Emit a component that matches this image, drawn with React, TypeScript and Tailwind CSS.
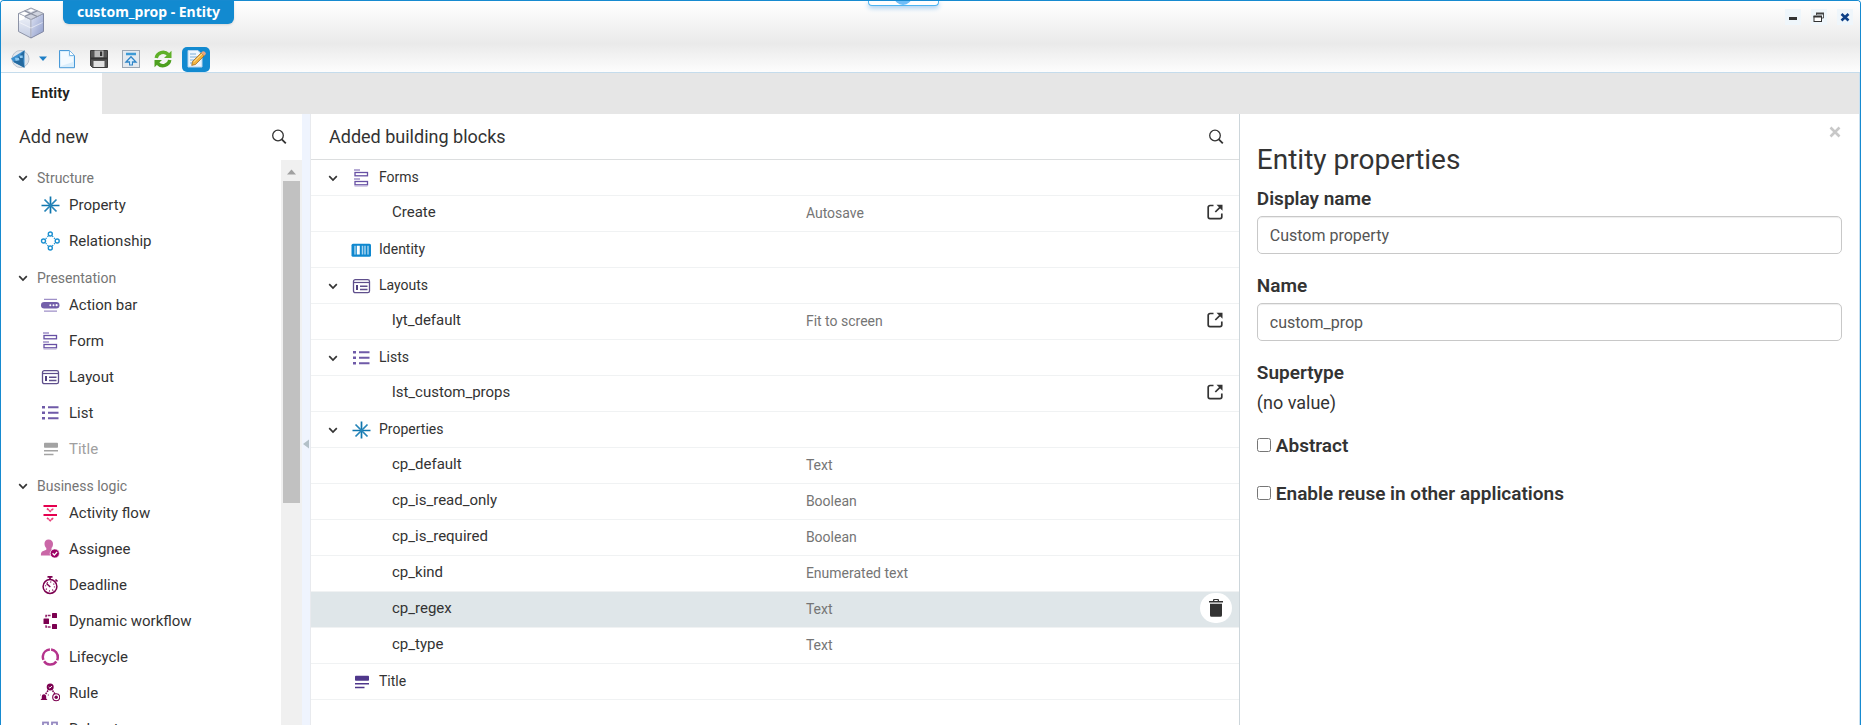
import { useState, type ReactNode } from "react";
import clsx from "clsx";

type IconProps = { className?: string };

function Icon({ children, className = "size-5" }: { children: ReactNode; className?: string }) {
  return (
    <svg viewBox="0 0 20 20" fill="none" className={clsx("shrink-0", className)} aria-hidden="true">
      {children}
    </svg>
  );
}

function Chevron() {
  return (
    <svg viewBox="0 0 10 10" className="size-[10px] shrink-0" fill="none" aria-hidden="true">
      <path d="M1.2 3.2 5 7l3.800-3.800" stroke="#333" strokeWidth="1.700" />
    </svg>
  );
}

function SearchIcon() {
  return (
    <svg viewBox="0 0 16 16" className="size-4" fill="none" stroke="#333" aria-hidden="true">
      <circle cx="7" cy="6.500" r="5.300" strokeWidth="1.300" />
      <path d="m10.800 10.300 4 4" strokeWidth="1.800" />
    </svg>
  );
}

function PropertyIcon({ className }: IconProps) {
  return (
    <Icon className={className}>
      <path d="M10.500 1.500v17M1.500 10.500h18" stroke="#0f76ae" strokeWidth="1.700" />
      <path d="m4.500 4.500 12 12m0-12-12 12" stroke="#2584b8" strokeWidth="1.700" />
    </Icon>
  );
}

function RelationshipIcon({ className }: IconProps) {
  return (
    <Icon className={className}>
      <g stroke="#1a8fd0" strokeWidth="1.400">
        <circle cx="10.300" cy="3" r="2" />
        <circle cx="3.500" cy="10" r="2" />
        <circle cx="17.200" cy="10" r="2" />
        <circle cx="10.300" cy="17" r="2" />
        <path d="m8.300 5-3 3.200M12.300 5l3 3.200M8.300 15l-3-3.200M12.300 15l3-3.200" strokeWidth="1.200" strokeDasharray="1.300 1.200" />
      </g>
    </Icon>
  );
}

function ActionBarIcon({ className }: IconProps) {
  return (
    <Icon className={className}>
      <path d="M4 4.300h13M4 16.200h13" stroke="#9f90c8" strokeWidth="1.300" />
      <rect x="1" y="7" width="18.500" height="6.400" rx="3.200" fill="#7460aa" />
      <g fill="#fff">
        <circle cx="10.300" cy="10.200" r="1" />
        <circle cx="13.500" cy="10.200" r="1" />
        <circle cx="16.600" cy="10.200" r="1.100" />
      </g>
    </Icon>
  );
}

function FormIcon({ className }: IconProps) {
  return (
    <Icon className={className}>
      <path d="M3 2h6M3 11h6" stroke="#9f90c8" strokeWidth="1.400" />
      <rect x="4" y="4.500" width="12.500" height="3.300" stroke="#6750a4" strokeWidth="1.300" />
      <rect x="4" y="13.500" width="12.500" height="3.300" stroke="#6750a4" strokeWidth="1.300" />
      <path d="M3.500 18.200h13" stroke="#c5bcde" strokeWidth="1" />
    </Icon>
  );
}

function LayoutIcon({ className }: IconProps) {
  return (
    <Icon className={className}>
      <rect x="2.500" y="3.700" width="16" height="13" rx="1.800" stroke="#5f4f8c" strokeWidth="1.300" />
      <path d="M2.500 6.500h16" stroke="#5f4f8c" strokeWidth="1.200" />
      <path d="M6 9v5" stroke="#4f3f7e" strokeWidth="2" />
      <path d="M9 10.200h7.500M9 13.500h7.500" stroke="#5f4f8c" strokeWidth="1.400" />
    </Icon>
  );
}

function ListIcon({ className }: IconProps) {
  return (
    <Icon className={className}>
      <path d="M2 4.300h3M2 9.800h3M2 15.300h3" stroke="#6f5aa8" strokeWidth="2.400" />
      <path d="M8 4.300h10.500M8 9.800h10.500M8 15.300h10.500" stroke="#6f5aa8" strokeWidth="2" />
    </Icon>
  );
}

function TitleShape({ color, className }: { color: string; className?: string }) {
  return (
    <Icon className={className}>
      <rect x="4" y="3.800" width="14" height="5" rx="0.800" fill={color} />
      <path d="M4 11.700h14M4 15.500h9.500" stroke={color} strokeWidth="1.500" />
    </Icon>
  );
}

function TitleIcon({ className }: IconProps) {
  return <TitleShape color="#4f378b" className={className} />;
}

function TitleMutedIcon({ className }: IconProps) {
  return <TitleShape color="#a3a3a3" className={className} />;
}

function IdentityIcon({ className }: IconProps) {
  return (
    <Icon className={className}>
      <rect x="0.500" y="3.700" width="19.500" height="13" rx="1.500" fill="#0f88cf" />
      <path d="M4 5.800v8.800M17 5.800v8.800" stroke="#fff" strokeWidth="0.900" />
      <path d="M7.300 5.800v8.800" stroke="#fff" strokeWidth="3" />
      <path d="M11.500 5.800v8.800M14 5.800v8.800" stroke="#a7d3ef" strokeWidth="1.500" />
    </Icon>
  );
}

function ActivityFlowIcon({ className }: IconProps) {
  return (
    <Icon className={className}>
      <path d="M3.500 3h13.500M3.500 12h13.500" stroke="#e5004f" strokeWidth="2" />
      <path d="m7 5.500 3.200 2.800 3.300-2.800M7 14.800l3.200 2.800 3.300-2.800" stroke="#e8407a" strokeWidth="1.700" strokeDasharray="2.400 0.400" />
    </Icon>
  );
}

function AssigneeIcon({ className }: IconProps) {
  return (
    <Icon className={className}>
      <path d="M8.500.5c-2.600 0-4 1.700-4 4.300 0 1.900.8 3.200 1.800 4.200v1.800L2.700 12.200C1.300 12.900.9 13.800.9 16.500h11L11.500 9c1-1 1.500-2.300 1.500-4.200C13 2.200 11.200.5 8.500.5Z" fill="#ca67a7" />
      <circle cx="14.800" cy="14.500" r="4.600" fill="#9b0063" stroke="#fff" strokeWidth="0.800" />
      <path d="m12.600 14.300 1.700 1.800 2.800-3.100" stroke="#fff" strokeWidth="1.300" />
    </Icon>
  );
}

function DeadlineIcon({ className }: IconProps) {
  return (
    <Icon className={className}>
      <circle cx="10" cy="11.500" r="6.900" stroke="#7c0050" strokeWidth="1.500" />
      <circle cx="10" cy="11.500" r="4.500" stroke="#7c0050" strokeWidth="1.300" strokeDasharray="1 2.500" />
      <path d="M7.500 1.800h5M10 2v2.500M15.500 4.500l2 2" stroke="#7c0050" strokeWidth="1.700" />
      <path d="M6.500 8.500 10.300 12" stroke="#7c0050" strokeWidth="1.500" />
    </Icon>
  );
}

function WorkflowIcon({ className }: IconProps) {
  return (
    <Icon className={className}>
      <rect x="3.500" y="7.500" width="5.500" height="5.500" rx="0.600" fill="#7c0050" />
      <rect x="12" y="2" width="5" height="5" rx="0.600" fill="#7c0050" />
      <rect x="12" y="13" width="5" height="5" rx="0.600" fill="#7c0050" />
      <path d="M6 6.200V4.500h5M6 14.300V16h5" stroke="#8f1f68" strokeWidth="1.400" strokeDasharray="2.800 0.700" />
    </Icon>
  );
}

function LifecycleIcon({ className }: IconProps) {
  return (
    <Icon className={className}>
      <circle cx="10.300" cy="10" r="7.500" stroke="#b5338c" strokeWidth="2.500" strokeDasharray="14.200 1.500" transform="rotate(-84 10.300 10)" />
    </Icon>
  );
}

function RuleIcon({ className }: IconProps) {
  return (
    <Icon className={className}>
      <circle cx="10.200" cy="4" r="3.500" fill="#7c0050" />
      <path d="m8.700 4 1.200 1.200 2-2.200" stroke="#fff" strokeWidth="1" />
      <path d="m8 7.500-2.500 3.800M12.500 7.500l2.500 3.500" stroke="#7c0050" strokeWidth="1.500" strokeDasharray="1.700 0.800" />
      <path d="M4 11.200c-1.700 0-2.200 1.300-2.200 2.600v1.800L.5 17h7l-1.300-1.400v-1.800c0-1.300-.5-2.600-2.200-2.600Z" fill="#7c0050" />
      <path d="M0 12.500v-1M8.300 12.500v-1" stroke="#7c0050" />
      <circle cx="16.200" cy="14.200" r="3.500" stroke="#7c0050" strokeWidth="1.100" />
      <circle cx="16.200" cy="14.200" r="1.700" fill="#7c0050" />
    </Icon>
  );
}

function RulesetIcon({ className }: IconProps) {
  return (
    <Icon className={className}>
      <rect x="3" y="3.500" width="5" height="5" stroke="#9488c0" strokeWidth="1.800" />
      <rect x="12" y="3.500" width="5" height="5" stroke="#9488c0" strokeWidth="1.800" />
      <rect x="3" y="12.500" width="5" height="5" stroke="#9488c0" strokeWidth="1.800" />
      <rect x="12" y="12.500" width="5" height="5" stroke="#9488c0" strokeWidth="1.800" />
    </Icon>
  );
}

function OpenIcon() {
  return (
    <svg viewBox="0 0 16 16" className="size-4" fill="none" stroke="#333" strokeWidth="1.700" aria-hidden="true">
      <path d="M6.500 1.500H3A1.800 1.800 0 0 0 1.200 3.300v9.500A1.800 1.800 0 0 0 3 14.600h10a1.800 1.800 0 0 0 1.800-1.800V9.500" />
      <path d="M8.300 8 14 2.300" />
      <path d="M9.500.700h6v6Z" fill="#333" stroke="none" />
    </svg>
  );
}

function TrashIcon() {
  return (
    <svg viewBox="0 0 16 20" className="h-5 w-4" fill="#333" aria-hidden="true">
      <path d="M5 3V2a1 1 0 0 1 1-1h4a1 1 0 0 1 1 1v1h4v1.500H1V3Zm1.300 0h3.400v-.9H6.300Z" />
      <path d="M2 5.700h12v11.500a1.500 1.500 0 0 1-1.500 1.500h-9A1.500 1.500 0 0 1 2 17.200Z" />
    </svg>
  );
}

function CubeLogo() {
  return (
    <svg viewBox="0 0 28 32" className="h-8 w-7" aria-hidden="true">
      <defs>
        <linearGradient id="cubeLeft" x1="0" y1="0" x2="0" y2="1">
          <stop offset="0" stopColor="#f2f5fb" />
          <stop offset="1" stopColor="#c3cce2" />
        </linearGradient>
        <linearGradient id="cubeRight" x1="0" y1="0" x2="1" y2="1">
          <stop offset="0" stopColor="#dfe4f4" />
          <stop offset="1" stopColor="#8c9ac9" />
        </linearGradient>
      </defs>
      <path d="M14 12.500 1.500 6.500v18L14 31Z" fill="url(#cubeLeft)" stroke="#8d93a6" />
      <path d="M14 12.500 26.500 6.500v18L14 31Z" fill="url(#cubeRight)" stroke="#8289a3" />
      <path d="M14 1 1.500 6.500 14 12.500l12.500-6Z" fill="#cfd3de" stroke="#999ead" />
      <path d="m7.500 3.800 12.700 5.700M20.500 3.800 7.500 9.500" stroke="#8b90a0" strokeWidth="1.200" />
      <path d="m11 3.500 3-1.400 3.200 1.400L14 5Z" fill="#fff" />
      <path d="m3.500 6.500 3.800-1.700L11.500 6.500l-4 1.900ZM7.500 9.500 2 7v7l5.500-2Z" fill="#fff" />
      <path d="M2.500 15.500 14 21l11.500-5.500M14 12.500V30" stroke="#fff" strokeOpacity=".55" fill="none" />
    </svg>
  );
}

function NavigateIcon() {
  return (
    <Icon>
      <circle cx="10.500" cy="10" r="8.500" fill="#dfe5ec" stroke="#b9c1cc" />
      <path d="M1 9.500 14.500 1.300v17.500L3.500 13Z" fill="#3b8fcf" />
      <path d="M14.500 1.300 13.300 12l1.200 6.800L3.500 13Z" fill="#24699f" />
      <path d="M5 8.800h3.800l.7 2.400-4 .8ZM9.300 6.500h3.400v2.600H10Z" fill="#8cc9f2" />
    </Icon>
  );
}

function NewDocIcon() {
  return (
    <Icon>
      <path d="M2.500 1.500h10l5 5v12.200h-15Z" fill="#d9eefc" stroke="#4a9ad8" />
      <path d="M4 3h7.500v5H16v5L4 17Z" fill="#f3faff" />
      <path d="M12.500 1.500v5h5Z" fill="#fff" stroke="#7db9e6" />
    </Icon>
  );
}

function SaveIcon() {
  return (
    <Icon>
      <path d="M1.500 1.500h17v17h-15l-2-2Z" fill="#555" stroke="#3c3c3c" />
      <rect x="5.500" y="1.500" width="9" height="7" fill="#b9b9b9" />
      <rect x="11" y="2.500" width="2.200" height="4.500" fill="#333" />
      <path d="M2 9.500h16" stroke="#333" strokeWidth="2" />
      <rect x="4.500" y="12" width="11" height="6" fill="#e2e2e2" />
    </Icon>
  );
}

function PublishIcon() {
  return (
    <Icon>
      <rect x="1.500" y="1.500" width="17" height="17" fill="#e3e9ef" stroke="#9aa6b3" />
      <path d="M5 5h10" stroke="#3d9ad6" strokeWidth="2.400" />
      <path d="M10 9v7.500" stroke="#3085c7" strokeWidth="4" />
      <path d="m5 13 5-5.200 5 5.200Z" fill="#d9efff" stroke="#3085c7" strokeWidth="1.300" />
      <path d="M10 10v5.500" stroke="#d9efff" strokeWidth="1.800" />
    </Icon>
  );
}

function RefreshIcon() {
  return (
    <Icon>
      <path d="M3.200 9a7 7 0 0 1 12-3.500" stroke="#5fb029" strokeWidth="3.400" />
      <path d="M18.500 1.700V9H11Z" fill="#5fb029" />
      <path d="M16.800 11a7 7 0 0 1-12 3.500" stroke="#4da01f" strokeWidth="3.400" />
      <path d="M1.500 18.300V11H9Z" fill="#4da01f" />
    </Icon>
  );
}

function EditIcon() {
  return (
    <Icon>
      <path d="M2 1.500h10l4 4v12.500H2Z" fill="#eef6fd" stroke="#b5d3ec" />
      <path d="M4 5h6M4 8h7M4 11h5M4 14h4" stroke="#7faed6" />
      <path d="m6.500 12.500 8.700-8.700 3 3L9.500 15.500l-3.800.9Z" fill="#f3b33d" stroke="#94611c" strokeWidth="0.700" />
      <path d="m15.200 3.800 1.200-1.200a1.500 1.500 0 0 1 2 0l1 1a1.500 1.500 0 0 1 0 2l-1.200 1.200Z" fill="#e9a37e" />
      <path d="m7.800 12.800 8.400-8" stroke="#fde49b" />
    </Icon>
  );
}

type PaletteItem = { label: string; icon: (p: IconProps) => ReactNode; disabled?: boolean };

const PALETTE: { title: string; items: PaletteItem[] }[] = [
  {
    title: "Structure",
    items: [
      { label: "Property", icon: PropertyIcon },
      { label: "Relationship", icon: RelationshipIcon },
    ],
  },
  {
    title: "Presentation",
    items: [
      { label: "Action bar", icon: ActionBarIcon },
      { label: "Form", icon: FormIcon },
      { label: "Layout", icon: LayoutIcon },
      { label: "List", icon: ListIcon },
      { label: "Title", icon: TitleMutedIcon, disabled: true },
    ],
  },
  {
    title: "Business logic",
    items: [
      { label: "Activity flow", icon: ActivityFlowIcon },
      { label: "Assignee", icon: AssigneeIcon },
      { label: "Deadline", icon: DeadlineIcon },
      { label: "Dynamic workflow", icon: WorkflowIcon },
      { label: "Lifecycle", icon: LifecycleIcon },
      { label: "Rule", icon: RuleIcon },
      { label: "Ruleset", icon: RulesetIcon },
    ],
  },
];

type Block = { name: string; detail?: string; opens?: boolean };

const BLOCKS: { title: string; icon: (p: IconProps) => ReactNode; children: Block[] }[] = [
  { title: "Forms", icon: FormIcon, children: [{ name: "Create", detail: "Autosave", opens: true }] },
  { title: "Identity", icon: IdentityIcon, children: [] },
  { title: "Layouts", icon: LayoutIcon, children: [{ name: "lyt_default", detail: "Fit to screen", opens: true }] },
  { title: "Lists", icon: ListIcon, children: [{ name: "lst_custom_props", opens: true }] },
  {
    title: "Properties",
    icon: PropertyIcon,
    children: [
      { name: "cp_default", detail: "Text" },
      { name: "cp_is_read_only", detail: "Boolean" },
      { name: "cp_is_required", detail: "Boolean" },
      { name: "cp_kind", detail: "Enumerated text" },
      { name: "cp_regex", detail: "Text" },
      { name: "cp_type", detail: "Text" },
    ],
  },
  { title: "Title", icon: TitleIcon, children: [] },
];

function WindowHeader() {
  return (
    <header className="relative h-[72px] shrink-0 border-b border-[#c5dcec] bg-linear-to-b from-white via-[#eaeaea] via-60% to-[#fdfdfd]">
      <div className="flex h-11 items-start justify-between pr-[7px]">
        <div className="flex items-start">
          <div className="pl-4 pt-1.5">
            <CubeLogo />
          </div>
          <h1 className="ml-[18px] h-[23px] rounded-b-md bg-[#128ad0] px-[14px] font-['Noto_Sans'] text-[14px] leading-[22px] font-bold text-white shadow-sm">
            custom_prop - Entity
          </h1>
        </div>
        <div className="flex gap-[10px] pt-2">
          <button aria-label="Minimize" className="flex size-4 items-center justify-center bg-[#eff6fb]">
            <svg viewBox="0 0 16 16" className="size-4"><path d="M4 9.500h8" stroke="#333" strokeWidth="3" /></svg>
          </button>
          <button aria-label="Restore" className="flex size-4 items-center justify-center bg-[#eff6fb]">
            <svg viewBox="0 0 16 16" className="size-4" fill="none">
              <path d="M5.500 6V4.500h7V9H11" stroke="#555" />
              <path d="M5 4.500h8" stroke="#444" strokeWidth="2" />
              <rect x="3" y="7.500" width="7.500" height="5" fill="#fff" stroke="#333" />
              <path d="M2.500 7.500H11" stroke="#333" strokeWidth="2" />
            </svg>
          </button>
          <button aria-label="Close window" className="flex size-4 items-center justify-center bg-[#eff6fb]">
            <svg viewBox="0 0 16 16" className="size-4"><path d="m4.500 5 7 6.500M11.500 5l-7 6.500" stroke="#0c3f86" strokeWidth="2.600" /></svg>
          </button>
        </div>
      </div>

      {/* Pull-down handle */}
      <div className="absolute left-1/2 top-0 flex h-[5px] w-[71px] -translate-x-[63px] justify-center overflow-visible rounded-b-[4px] border border-t-0 border-[#4db5f2] bg-white shadow-[0_2px_5px_#9cc9ee]">
        <svg viewBox="0 0 18 4" className="h-1 w-[18px]" aria-hidden="true">
          <circle cx="9" cy="-5" r="9" fill="#6dbdf7" />
        </svg>
      </div>

      <div className="flex h-7 items-center pl-[9px]">
        <button aria-label="Navigate"><NavigateIcon /></button>
        <button aria-label="History" className="ml-2">
          <svg viewBox="0 0 10 6" className="h-1.5 w-[10px]"><path d="M1 .5h8L5 5Z" fill="#1e7fc6" /></svg>
        </button>
        <div className="ml-[9px] flex items-center gap-3">
          <button aria-label="New"><NewDocIcon /></button>
          <button aria-label="Save"><SaveIcon /></button>
          <button aria-label="Publish"><PublishIcon /></button>
          <button aria-label="Refresh"><RefreshIcon /></button>
        </div>
        <button aria-label="Edit" className="ml-[9px] flex h-[25px] w-7 items-center justify-center rounded-[5px] bg-[#128ad0]">
          <EditIcon />
        </button>
      </div>
    </header>
  );
}

function Palette() {
  return (
    <aside className="flex w-[301px] shrink-0 flex-col">
      <div className="flex h-[46px] shrink-0 items-center justify-between pb-px pl-[18px] pr-[15px]">
        <h2 className="text-[18px]">Add new</h2>
        <button aria-label="Search palette"><SearchIcon /></button>
      </div>
      <div className="flex min-h-0 flex-1">
        <div className="flex min-w-0 flex-1 flex-col gap-[10px] overflow-hidden pt-[9px]">
          {PALETTE.map((group) => (
            <section key={group.title}>
              <button className="flex h-[18px] items-center gap-[9px] pl-[17px] text-[14px] text-[#757575]">
                <Chevron />
                {group.title}
              </button>
              <ul>
                {group.items.map(({ label, icon: ItemIcon, disabled }) => (
                  <li
                    key={label}
                    className={clsx("flex h-9 items-center gap-[9px] pl-[39px] text-[15px]", disabled && "text-[#a0a0a0]")}
                  >
                    <ItemIcon />
                    {label}
                  </li>
                ))}
              </ul>
            </section>
          ))}
        </div>
        {/* Scrollbar */}
        <div className="flex w-[21px] shrink-0 flex-col bg-[#f0f0f0] px-0.5">
          <svg viewBox="0 0 17 21" className="h-[21px] w-[17px]" aria-hidden="true">
            <path d="M4 14.500 8.500 9.500l4.500 5Z" fill="#a0a0a0" />
          </svg>
          <div className="h-[57%] w-[17px] bg-[#c1c1c1]" />
        </div>
      </div>
    </aside>
  );
}

function BlockRow({ block, selected, onSelect }: { block: Block; selected: boolean; onSelect: () => void }) {
  return (
    <li
      onClick={onSelect}
      className={clsx(
        "grid h-9 grid-cols-2 items-center border-b border-[#f0f2f3] pl-[81px] pr-[19px]",
        selected && "bg-[#dfe6e9]",
      )}
    >
      <span className="pb-0.5 text-[15px]">{block.name}</span>
      <span className="-mr-3 flex h-[35px] items-center justify-between text-[14px] text-[#757575]">
        {block.detail}
        {block.opens && (
          <button aria-label={`Open ${block.name}`} className="mb-[3px] ml-auto flex w-8 justify-center pr-0.5"><OpenIcon /></button>
        )}
        {selected && (
          <button aria-label={`Delete ${block.name}`} className="mb-[3px] ml-auto flex h-[30px] w-8 items-center justify-center rounded-full bg-white">
            <TrashIcon />
          </button>
        )}
      </span>
    </li>
  );
}

function BuildingBlocks() {
  const [selected, setSelected] = useState("cp_regex");

  return (
    <main className="min-w-0 border-r border-[#cdd6db]">
      <div className="flex h-[46px] items-center justify-between border-b border-[#dcdedf] pl-[18px] pr-[15px]">
        <h2 className="text-[18px]">Added building blocks</h2>
        <button aria-label="Search building blocks"><SearchIcon /></button>
      </div>
      <ul>
        {BLOCKS.map(({ title, icon: GroupIcon, children }) => (
          <li key={title}>
            <div className="flex h-9 items-center border-b border-[#f0f2f3] pl-[17px] text-[14px]">
              <span className="flex w-[23px]">
                {children.length > 0 && <button aria-label={`Collapse ${title}`}><Chevron /></button>}
              </span>
              <GroupIcon />
              <span className="ml-2">{title}</span>
            </div>
            <ul>
              {children.map((block) => (
                <BlockRow
                  key={block.name}
                  block={block}
                  selected={block.name === selected}
                  onSelect={() => setSelected(block.name)}
                />
              ))}
            </ul>
          </li>
        ))}
      </ul>
    </main>
  );
}

function TextField({ id, label, value }: { id: string; label: string; value: string }) {
  return (
    <div className="mb-[18px]">
      <label htmlFor={id} className="mb-[3px] block text-[19px] leading-7 font-semibold">{label}</label>
      <input
        id={id}
        defaultValue={value}
        className="block h-[38px] w-full rounded-[5px] border border-[#c8c8c8] px-3 text-[16px] text-[#555] shadow-[inset_0_1px_1px_rgba(0,0,0,0.075)]"
      />
    </div>
  );
}

function CheckField({ label }: { label: string }) {
  return (
    <label className="mb-5 flex h-7 items-center gap-[5px] text-[19px] font-semibold">
      <input type="checkbox" className="mb-0.5 size-[14px]" />
      {label}
    </label>
  );
}

function PropertiesPanel() {
  return (
    <aside className="relative min-w-0 px-[17px] pt-[26px]">
      <button aria-label="Close panel" className="absolute right-[18px] top-3">
        <svg viewBox="0 0 12 12" className="size-3"><path d="m1.500 1.500 9 9m0-9-9 9" stroke="#c8c8c8" strokeWidth="2.600" /></svg>
      </button>
      <h2 className="mb-[5px] text-[28px] leading-[40px]">Entity properties</h2>
      <TextField id="display-name" label="Display name" value="Custom property" />
      <TextField id="name" label="Name" value="custom_prop" />
      <dl className="mb-[13px]">
        <dt className="text-[19px] leading-7 font-semibold">Supertype</dt>
        <dd className="text-[18px] leading-8">(no value)</dd>
      </dl>
      <CheckField label="Abstract" />
      <CheckField label="Enable reuse in other applications" />
    </aside>
  );
}

export default function App() {
  return (
    <div className="flex h-screen flex-col overflow-hidden rounded-t border border-b-0 border-[#168ad0] bg-white font-['Roboto',sans-serif] text-[#333]">
      <WindowHeader />
      <div className="flex min-h-0 flex-1 flex-col border-r border-[#c9e0f0]">
        <nav className="flex h-[41px] shrink-0 bg-[#e6e6e6]">
          <button className="w-[101px] bg-white pr-0.5 text-[15px] font-semibold text-[#222]">Entity</button>
        </nav>
        <div className="flex min-h-0 flex-1">
          <Palette />
          <button aria-label="Collapse palette" className="flex w-[9px] shrink-0 items-center border-r border-[#e8eaee] bg-[#eff4fe]">
            <svg viewBox="0 0 8 10" className="mt-12 h-[10px] w-2"><path d="M7 .5v9L1 5Z" fill="#b3c0c8" /></svg>
          </button>
          <div className="grid min-w-0 flex-1 grid-cols-[3fr_2fr]">
            <BuildingBlocks />
            <PropertiesPanel />
          </div>
        </div>
      </div>
    </div>
  );
}
